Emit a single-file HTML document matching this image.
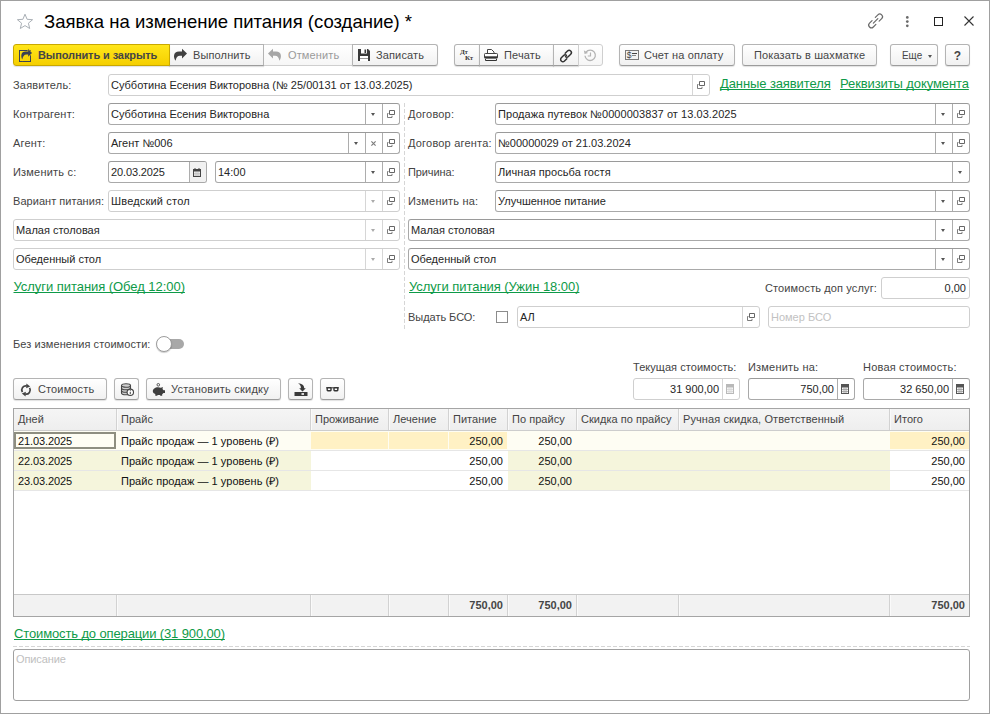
<!DOCTYPE html><html lang="ru"><head><meta charset="utf-8"><title>Заявка на изменение питания</title><style>
*{box-sizing:border-box}
html,body{margin:0;padding:0}
body{width:990px;height:714px;position:relative;overflow:hidden;background:#fff;font-family:"Liberation Sans",sans-serif;font-size:11px;color:#1a1a1a}
#frame{position:absolute;left:0;top:0;width:990px;height:714px;border:1px solid #a0a0a0;pointer-events:none}
.a{position:absolute;white-space:nowrap}
.lbl{position:absolute;white-space:nowrap;font-size:11px;color:#444;line-height:14px;letter-spacing:.2px}

.fld{position:absolute;height:22px;padding-top:1px;border:1px solid #a9a9a9;border-top-color:#9a9a9a;border-radius:3px;background:#fff;font-size:11px;line-height:19px;padding-left:2px;color:#262626;white-space:nowrap;overflow:hidden}
.fld.ro{border-color:#cfcfcf}
.fld.num{text-align:right;padding-right:0}
.fld .seg{position:absolute;top:0;bottom:0;width:17px;border-left:1px solid #adadad}
.fld.ro .seg{border-left-color:#d6d6d6}
.btn{position:absolute;height:22px;letter-spacing:.13px;border:1px solid #b4b4b4;border-bottom-color:#9c9c9c;border-radius:3px;background:linear-gradient(#ffffff,#f1f1f1);font-size:11px;line-height:20px;color:#464646;white-space:nowrap;box-shadow:0 1px 1px rgba(0,0,0,.12)}
.btn.dis{border-color:#cfcfcf;background:linear-gradient(#fff,#f6f6f6);box-shadow:none}
.btn.y{background:linear-gradient(#ffe61a,#f5cf00);border-color:#c9a800;font-weight:bold;color:#454545}
.lnk{position:absolute;white-space:nowrap;font-size:13px;color:#0e9a48;text-decoration:underline;text-decoration-skip-ink:none;letter-spacing:-.1px;line-height:16px}
.ph{color:#c2c2c2}
svg{position:absolute;overflow:visible}
.tri{position:absolute;width:0;height:0;border-left:2.5px solid transparent;border-right:2.5px solid transparent;border-top:3px solid #555}
</style></head><body>
<svg style="left:16px;top:12.700px" width="18" height="17" viewBox="0 0 18 17"><path d="M9 1.2l2.1 5.1 5.5 .4-4.2 3.5 1.3 5.3L9 12.6l-4.7 2.9 1.3-5.3L1.4 6.7l5.5-.4z" fill="none" stroke="#aab0b6" stroke-width="1"/></svg>
<div class="a" style="left:44px;top:10px;font-size:18.5px;line-height:24px;color:#000">Заявка на изменение питания (создание) *</div>
<svg style="left:867px;top:12px" width="17" height="17" viewBox="0 0 17 17"><g transform="translate(8.600,8.900) rotate(-45)" fill="none" stroke="#6a6a6a" stroke-width="1.200" stroke-linecap="round"><path d="M-2.300 -2.700H-5.900a2.700 2.700 0 0 0 0 5.400H-2.300"/><path d="M2.300 -2.700H5.900a2.700 2.700 0 0 1 0 5.400H2.300"/><path d="M-3.200 0H3.200"/></g></svg>
<svg style="left:905px;top:16px" width="5" height="12" viewBox="0 0 5 12"><circle cx="2.300" cy="1.400" r="1.350" fill="#6a6a6a"/><circle cx="2.300" cy="5.600" r="1.350" fill="#6a6a6a"/><circle cx="2.300" cy="9.800" r="1.350" fill="#6a6a6a"/></svg>
<div class="a" style="left:934px;top:17px;width:9px;height:9px;border:1px solid #222"></div>
<svg style="left:964px;top:16px" width="10" height="10" viewBox="0 0 10 10"><path d="M0.5 0.5l9 9M9.5 0.5l-9 9" stroke="#333" stroke-width="1.1" fill="none"/></svg>
<div class="btn y" style="left:13px;top:44px;width:157px;border-radius:3px 0 0 3px;z-index:2"><svg style="left:5px;top:3px" width="14" height="14" viewBox="0 0 14 14"><rect x="0.5" y="2.5" width="11" height="11" fill="none" stroke="#3c4254" stroke-width="1"/><path d="M3.300 11.500C1.500 8 2 3.500 6.500 3.500H9.200V1L13 5 9.200 8.800V6.500H7.500C5 6.500 3.800 8.500 3.300 11.500Z" fill="#3c4254" stroke="#fbdc0a" stroke-width="1.200" paint-order="stroke"/></svg><span style="margin-left:24px;letter-spacing:-.1px">Выполнить и закрыть</span></div>
<div class="btn " style="left:169px;top:44px;width:95px;border-radius:0;border-left:none"><svg style="left:4px;top:3px" width="14" height="13" viewBox="0 0 14 13"><path d="M2.6 12.800C0.200 9.500 0 3.500 6 3.500H9V0.700L14 5.500 9 10.400V7.700H7C4.500 7.700 3 9.500 2.600 12.800Z" fill="#414141"/></svg><span style="margin-left:24px">Выполнить</span></div>
<div class="btn dis" style="left:264px;top:44px;width:88px;border-radius:0;border-left:none;border-right:none"><svg style="left:4px;top:3px" width="14" height="13" viewBox="0 0 14 13"><path d="M2.6 12.800C0.200 9.500 0 3.500 6 3.500H9V0.700L14 5.500 9 10.400V7.700H7C4.500 7.700 3 9.500 2.600 12.800Z" fill="#a6a6a6" transform="translate(14,0) scale(-1,1)"/></svg><span style="margin-left:24px;color:#9a9a9a">Отменить</span></div>
<div class="btn " style="left:352px;top:44px;width:86px;border-radius:0 3px 3px 0"><svg style="left:5px;top:4px" width="12" height="12" viewBox="0 0 12 12"><path d="M0 0h10l2 2v10h-12z" fill="#3a3a3a"/><rect x="3" y="0" width="6" height="4.500" fill="#fff"/><rect x="6.500" y="0.500" width="1.600" height="3.500" fill="#3a3a3a"/><rect x="2" y="7" width="8" height="5" fill="#fff"/><path d="M2 9.500h8" stroke="#9a9a9a" stroke-width="1"/></svg><span style="margin-left:23px">Записать</span></div>
<div class="btn " style="left:454px;top:44px;width:26px;border-radius:3px 0 0 3px"><span class="a" style="left:5px;top:3px;font-family:'Liberation Serif',serif;font-size:7px;font-weight:bold;line-height:8px;color:#333;letter-spacing:-.2px">Д<span style="font-size:6px">т</span></span><span class="a" style="left:10px;top:9px;font-family:'Liberation Serif',serif;font-size:7px;font-weight:bold;line-height:8px;color:#333;letter-spacing:-.2px">К<span style="font-size:6px">т</span></span></div>
<div class="btn " style="left:479px;top:44px;width:75px;border-radius:0"><svg style="left:4px;top:4px" width="14" height="12" viewBox="0 0 14 12"><path d="M3.500 4.500V.5h4l2.500 2.500v1.500" fill="#fff" stroke="#444"/><rect x="0.500" y="4.500" width="13" height="4.500" rx="0.800" fill="#fff" stroke="#444"/><rect x="0.500" y="7.300" width="13" height="2" fill="#333"/><path d="M1.500 10v1.500h11V10" fill="none" stroke="#333"/></svg><span style="margin-left:24px">Печать</span></div>
<div class="btn " style="left:553px;top:44px;width:26px;border-radius:0"><svg style="left:5px;top:4px" width="14" height="14" viewBox="0 0 14 14"><g fill="none" stroke="#333" stroke-width="1.450" stroke-linecap="round"><path d="M6.200 4.300l2.300-2.300a2.200 2.200 0 0 1 3.200 3.200l-2.300 2.300a2.200 2.200 0 0 1-2.900 .2"/><path d="M7.800 9.700l-2.300 2.300a2.200 2.200 0 0 1-3.200-3.200l2.300-2.300a2.200 2.200 0 0 1 2.900-.2"/></g></svg></div>
<div class="btn dis" style="left:578px;top:44px;width:25px;border-radius:0 3px 3px 0"><svg style="left:4px;top:4px" width="14" height="13" viewBox="0 0 14 13"><path d="M3 3.200A5.200 5.200 0 1 1 2 6.800" fill="none" stroke="#b4b4b4" stroke-width="1.300"/><path d="M0.800 1.200l.8 3.800 3.500-1z" fill="#b4b4b4"/><path d="M7.500 3.500v3.500h-2.700" fill="none" stroke="#b4b4b4" stroke-width="1.200"/></svg></div>
<div class="btn " style="left:619px;top:44px;width:116px;"><svg style="left:5px;top:5px" width="14" height="10" viewBox="0 0 14 10"><rect x="0.500" y="0.500" width="13" height="9" fill="#f3f3f3" stroke="#7a7a7a"/><path d="M7 3.500h5" stroke="#444"/><path d="M7 5.500h4" stroke="#888"/><text x="1.800" y="8.200" font-size="8.500" fill="#444" font-family="Liberation Sans,sans-serif">$</text></svg><span style="margin-left:24px">Счет на оплату</span></div>
<div class="btn " style="left:742px;top:44px;width:135px;"><span style="margin-left:11px">Показать в шахматке</span></div>
<div class="btn " style="left:890px;top:44px;width:48px;"><span style="margin-left:11px;letter-spacing:0;display:inline-block;transform:scaleX(.9);transform-origin:0 50%">Еще</span><i class="tri" style="left:37px;top:10px;border-top-color:#555"></i></div>
<div class="btn " style="left:945px;top:44px;width:25px;"><span style="display:block;text-align:center;font-weight:bold;font-size:12px;line-height:22px">?</span></div>
<div class="lbl" style="left:13px;top:78px;">Заявитель:</div>
<div class="fld ro " style="left:108px;top:74px;width:602px;height:22px;">Субботина Есения Викторовна (№ 25/00131 от 13.03.2025)<span class="seg" style="right:0px"><svg style="left:4px;top:6px" width="8" height="8" viewBox="0 0 8 8"><path d="M0.5 3.5h4.500v4h-4.500z" fill="none" stroke="#666" stroke-width="1" opacity=".85"/><rect x="1.500" y="0" width="6.500" height="5.800" fill="#fff"/><path d="M2.500 0.5h5v4h-5z" fill="#fff" stroke="#666" stroke-width="1"/></svg></span></div>
<div class="lnk" style="left:720px;top:76px">Данные заявителя</div>
<div class="lnk" style="left:840px;top:76px">Реквизиты документа</div>
<div class="lbl" style="left:13px;top:107px;">Контрагент:</div>
<div class="fld  " style="left:108px;top:103px;width:292px;height:22px;">Субботина Есения Викторовна<span class="seg" style="right:0px"><svg style="left:4px;top:6px" width="8" height="8" viewBox="0 0 8 8"><path d="M0.5 3.5h4.500v4h-4.500z" fill="none" stroke="#666" stroke-width="1" opacity=".85"/><rect x="1.500" y="0" width="6.500" height="5.800" fill="#fff"/><path d="M2.500 0.5h5v4h-5z" fill="#fff" stroke="#666" stroke-width="1"/></svg></span><span class="seg" style="right:17px"><i class="tri" style="left:5px;top:8.5px;border-top-color:#555"></i></span></div>
<div class="lbl" style="left:408px;top:107px;">Договор:</div>
<div class="fld  " style="left:495px;top:103px;width:475px;height:22px;"><span style="letter-spacing:.06px">Продажа путевок №0000003837 от 13.03.2025</span><span class="seg" style="right:0px"><svg style="left:4px;top:6px" width="8" height="8" viewBox="0 0 8 8"><path d="M0.5 3.5h4.500v4h-4.500z" fill="none" stroke="#666" stroke-width="1" opacity=".85"/><rect x="1.500" y="0" width="6.500" height="5.800" fill="#fff"/><path d="M2.500 0.5h5v4h-5z" fill="#fff" stroke="#666" stroke-width="1"/></svg></span><span class="seg" style="right:17px"><i class="tri" style="left:5px;top:8.5px;border-top-color:#555"></i></span></div>
<div class="lbl" style="left:13px;top:136px;">Агент:</div>
<div class="fld  " style="left:108px;top:132px;width:292px;height:22px;">Агент №006<span class="seg" style="right:0px"><svg style="left:4px;top:6px" width="8" height="8" viewBox="0 0 8 8"><path d="M0.5 3.5h4.500v4h-4.500z" fill="none" stroke="#666" stroke-width="1" opacity=".85"/><rect x="1.500" y="0" width="6.500" height="5.800" fill="#fff"/><path d="M2.500 0.5h5v4h-5z" fill="#fff" stroke="#666" stroke-width="1"/></svg></span><span class="seg" style="right:17px"><svg style="left:5px;top:7.500px" width="5" height="5" viewBox="0 0 5 5"><path d="M0.400 0.400l4.200 4.200M4.600 0.400l-4.200 4.200" stroke="#7d7d7d" stroke-width="1.150" fill="none"/></svg></span><span class="seg" style="right:34px"><i class="tri" style="left:5px;top:8.5px;border-top-color:#555"></i></span></div>
<div class="lbl" style="left:408px;top:136px;">Договор агента:</div>
<div class="fld  " style="left:495px;top:132px;width:475px;height:22px;">№00000029 от 21.03.2024<span class="seg" style="right:0px"><svg style="left:4px;top:6px" width="8" height="8" viewBox="0 0 8 8"><path d="M0.5 3.5h4.500v4h-4.500z" fill="none" stroke="#666" stroke-width="1" opacity=".85"/><rect x="1.500" y="0" width="6.500" height="5.800" fill="#fff"/><path d="M2.500 0.5h5v4h-5z" fill="#fff" stroke="#666" stroke-width="1"/></svg></span><span class="seg" style="right:17px"><i class="tri" style="left:5px;top:8.5px;border-top-color:#555"></i></span></div>
<div class="lbl" style="left:13px;top:165px;">Изменить с:</div>
<div class="fld  " style="left:108px;top:161px;width:99px;height:22px;"><span style="letter-spacing:-.12px">20.03.2025</span><span class="seg" style="right:0px;background:#f1f1f1"><svg style="left:3px;top:6px" width="8" height="9" viewBox="0 0 8 9"><rect x="0.500" y="1.500" width="7" height="7" fill="#ececec" stroke="#444"/><rect x="0" y="1" width="8" height="2.500" fill="#444"/><rect x="1.500" y="0" width="1" height="1.500" fill="#444"/><rect x="5.500" y="0" width="1" height="1.500" fill="#444"/><path d="M1 5.500h6M1 7h6M3 4v4M5 4v4" stroke="#bdbdbd" stroke-width=".7" fill="none"/></svg></span></div>
<div class="fld  " style="left:215px;top:161px;width:185px;height:22px;">14:00<span class="seg" style="right:0px"><svg style="left:4px;top:6px" width="8" height="8" viewBox="0 0 8 8"><path d="M0.5 3.5h4.500v4h-4.500z" fill="none" stroke="#666" stroke-width="1" opacity=".85"/><rect x="1.500" y="0" width="6.500" height="5.800" fill="#fff"/><path d="M2.500 0.5h5v4h-5z" fill="#fff" stroke="#666" stroke-width="1"/></svg></span><span class="seg" style="right:17px"><i class="tri" style="left:5px;top:8.5px;border-top-color:#555"></i></span></div>
<div class="lbl" style="left:408px;top:165px;letter-spacing:-.1px">Причина:</div>
<div class="fld  " style="left:495px;top:161px;width:475px;height:22px;"><span style="letter-spacing:.07px">Личная просьба гостя</span><span class="seg" style="right:0px"><i class="tri" style="left:5px;top:8.5px;border-top-color:#555"></i></span></div>
<div class="lbl" style="left:13px;top:194px;letter-spacing:.04px">Вариант питания:</div>
<div class="fld ro " style="left:108px;top:190px;width:292px;height:22px;"><span style="letter-spacing:.18px">Шведский стол</span><span class="seg" style="right:0px"><svg style="left:4px;top:6px" width="8" height="8" viewBox="0 0 8 8"><path d="M0.5 3.5h4.500v4h-4.500z" fill="none" stroke="#666" stroke-width="1" opacity=".85"/><rect x="1.500" y="0" width="6.500" height="5.800" fill="#fff"/><path d="M2.500 0.5h5v4h-5z" fill="#fff" stroke="#666" stroke-width="1"/></svg></span><span class="seg" style="right:17px"><i class="tri" style="left:5px;top:8.5px;border-top-color:#aaa"></i></span></div>
<div class="lbl" style="left:408px;top:194px;">Изменить на:</div>
<div class="fld  " style="left:495px;top:190px;width:475px;height:22px;">Улучшенное питание<span class="seg" style="right:0px"><svg style="left:4px;top:6px" width="8" height="8" viewBox="0 0 8 8"><path d="M0.5 3.5h4.500v4h-4.500z" fill="none" stroke="#666" stroke-width="1" opacity=".85"/><rect x="1.500" y="0" width="6.500" height="5.800" fill="#fff"/><path d="M2.500 0.5h5v4h-5z" fill="#fff" stroke="#666" stroke-width="1"/></svg></span><span class="seg" style="right:17px"><i class="tri" style="left:5px;top:8.5px;border-top-color:#555"></i></span></div>
<div class="fld ro " style="left:13px;top:219px;width:387px;height:22px;">Малая столовая<span class="seg" style="right:0px"><svg style="left:4px;top:6px" width="8" height="8" viewBox="0 0 8 8"><path d="M0.5 3.5h4.500v4h-4.500z" fill="none" stroke="#666" stroke-width="1" opacity=".85"/><rect x="1.500" y="0" width="6.500" height="5.800" fill="#fff"/><path d="M2.500 0.5h5v4h-5z" fill="#fff" stroke="#666" stroke-width="1"/></svg></span><span class="seg" style="right:17px"><i class="tri" style="left:5px;top:8.5px;border-top-color:#aaa"></i></span></div>
<div class="fld  " style="left:408px;top:219px;width:562px;height:22px;">Малая столовая<span class="seg" style="right:0px"><svg style="left:4px;top:6px" width="8" height="8" viewBox="0 0 8 8"><path d="M0.5 3.5h4.500v4h-4.500z" fill="none" stroke="#666" stroke-width="1" opacity=".85"/><rect x="1.500" y="0" width="6.500" height="5.800" fill="#fff"/><path d="M2.500 0.5h5v4h-5z" fill="#fff" stroke="#666" stroke-width="1"/></svg></span><span class="seg" style="right:17px"><i class="tri" style="left:5px;top:8.5px;border-top-color:#555"></i></span></div>
<div class="fld ro " style="left:13px;top:248px;width:387px;height:22px;">Обеденный стол<span class="seg" style="right:0px"><svg style="left:4px;top:6px" width="8" height="8" viewBox="0 0 8 8"><path d="M0.5 3.5h4.500v4h-4.500z" fill="none" stroke="#666" stroke-width="1" opacity=".85"/><rect x="1.500" y="0" width="6.500" height="5.800" fill="#fff"/><path d="M2.500 0.5h5v4h-5z" fill="#fff" stroke="#666" stroke-width="1"/></svg></span><span class="seg" style="right:17px"><i class="tri" style="left:5px;top:8.5px;border-top-color:#aaa"></i></span></div>
<div class="fld  " style="left:408px;top:248px;width:562px;height:22px;">Обеденный стол<span class="seg" style="right:0px"><svg style="left:4px;top:6px" width="8" height="8" viewBox="0 0 8 8"><path d="M0.5 3.5h4.500v4h-4.500z" fill="none" stroke="#666" stroke-width="1" opacity=".85"/><rect x="1.500" y="0" width="6.500" height="5.800" fill="#fff"/><path d="M2.500 0.5h5v4h-5z" fill="#fff" stroke="#666" stroke-width="1"/></svg></span><span class="seg" style="right:17px"><i class="tri" style="left:5px;top:8.5px;border-top-color:#555"></i></span></div>
<div class="lnk" style="left:13.5px;top:279px;letter-spacing:-.05px">Услуги питания (Обед 12:00)</div>
<div class="lnk" style="left:409px;top:279px;letter-spacing:-.05px">Услуги питания (Ужин 18:00)</div>
<div class="lbl" style="left:765px;top:281px;letter-spacing:.12px">Стоимость доп услуг:</div>
<div class="fld ro num" style="left:881px;top:277px;width:89px;height:22px;padding-right:3px">0,00</div>
<div class="lbl" style="left:408px;top:310px;letter-spacing:-.04px">Выдать БСО:</div>
<div class="a" style="left:496px;top:311px;width:12px;height:12px;border:1px solid #8c8c8c;background:#fff"></div>
<div class="fld ro " style="left:517px;top:306px;width:243px;height:22px;">АЛ<span class="seg" style="right:0px"><svg style="left:4px;top:6px" width="8" height="8" viewBox="0 0 8 8"><path d="M0.5 3.5h4.500v4h-4.500z" fill="none" stroke="#666" stroke-width="1" opacity=".85"/><rect x="1.500" y="0" width="6.500" height="5.800" fill="#fff"/><path d="M2.500 0.5h5v4h-5z" fill="#fff" stroke="#666" stroke-width="1"/></svg></span></div>
<div class="fld ro " style="left:768px;top:306px;width:202px;height:22px;"><span class="ph">Номер БСО</span></div>
<div class="lbl" style="left:13px;top:337px;letter-spacing:.08px">Без изменения стоимости:</div>
<div class="a" style="left:161px;top:339px;width:23px;height:10px;border-radius:5px;background:#a8a8a8"></div>
<div class="a" style="left:156px;top:336px;width:16px;height:16px;border-radius:50%;background:#fff;border:1px solid #9c9c9c;box-shadow:0 1px 1px rgba(0,0,0,.2)"></div>
<div class="lbl" style="left:633px;top:360px;letter-spacing:.05px">Текущая стоимость:</div>
<div class="lbl" style="left:748px;top:360px;">Изменить на:</div>
<div class="lbl" style="left:863px;top:360px;">Новая стоимость:</div>
<div class="fld ro num" style="left:633px;top:378px;width:107px;height:22px;padding-right:20px">31 900,00<span class="seg" style="right:0px"><svg style="left:3px;top:5px" width="8" height="10" viewBox="0 0 8 10"><rect x="0.5" y="0.5" width="7" height="9" fill="#f4f4f4" stroke="#b9b9b9"/><rect x="1" y="1" width="6" height="2.5" fill="#b9b9b9"/><path d="M3 4v5M5 4v5M1 5.5h6M1 7.5h6" stroke="#d5d5d5" stroke-width=".8" fill="none"/></svg></span></div>
<div class="fld  num" style="left:748px;top:378px;width:107px;height:22px;padding-right:20px">750,00<span class="seg" style="right:0px"><svg style="left:3px;top:5px" width="8" height="10" viewBox="0 0 8 10"><rect x="0.5" y="0.5" width="7" height="9" fill="#f4f4f4" stroke="#555"/><rect x="1" y="1" width="6" height="2.5" fill="#555"/><path d="M3 4v5M5 4v5M1 5.5h6M1 7.5h6" stroke="#9a9a9a" stroke-width=".8" fill="none"/></svg></span></div>
<div class="fld  num" style="left:863px;top:378px;width:107px;height:22px;padding-right:20px">32 650,00<span class="seg" style="right:0px"><svg style="left:3px;top:5px" width="8" height="10" viewBox="0 0 8 10"><rect x="0.5" y="0.5" width="7" height="9" fill="#f4f4f4" stroke="#555"/><rect x="1" y="1" width="6" height="2.5" fill="#555"/><path d="M3 4v5M5 4v5M1 5.5h6M1 7.5h6" stroke="#9a9a9a" stroke-width=".8" fill="none"/></svg></span></div>
<div class="btn " style="left:13px;top:378px;width:94px;"><svg style="left:6px;top:5px" width="12" height="12" viewBox="0 0 12 12"><g fill="none" stroke="#444" stroke-width="1.700"><path d="M2.360 8.100A4.200 4.200 0 0 1 6.730 1.860"/><path d="M9.640 3.900A4.200 4.200 0 0 1 5.270 10.140"/></g><path d="M6.400 -.6L10.200 2.400 6.200 4.200z" fill="#444"/><path d="M5.600 12.600L1.800 9.600 5.800 7.800z" fill="#444"/></svg><span style="margin-left:24px">Стоимость</span></div>
<div class="btn " style="left:114px;top:378px;width:25px;"><svg style="left:5px;top:4px" width="14" height="13" viewBox="0 0 14 13"><g fill="#cfcfcf" stroke="#444" stroke-width="1.100"><path d="M1.500 2.500v7.500c0 1 2 1.800 4.500 1.800s4.500-.8 4.500-1.800V2.500"/><ellipse cx="6" cy="2.500" rx="4.500" ry="1.800"/><path d="M1.500 5c0 1 2 1.800 4.500 1.800s4.500-.8 4.500-1.800M1.500 7.500c0 1 2 1.800 4.500 1.800s4.500-.8 4.500-1.800" fill="none"/><circle cx="10.300" cy="9.300" r="3.200" fill="#fff"/></g><path d="M10.300 7.300v.9M10.300 9v2.300" stroke="#555" stroke-width="1.100"/></svg></div>
<div class="btn " style="left:146px;top:378px;width:135px;"><svg style="left:5px;top:4px" width="14" height="13" viewBox="0 0 14 13"><circle cx="6.300" cy="1.800" r="1.300" fill="none" stroke="#555" stroke-width="1"/><path d="M.8 8.200c0-2.300 2.200-4 5.200-4 1.100 0 2.100.2 2.900.6l2-.8-.4 1.900c.5.400.8.900 1 1.400h1.500v2.600h-1.600c-.3.500-.7.900-1.200 1.200V12.800H8.300l-.3-.9a8 8 0 0 1-2.400 0l-.3.900H3.300v-1.700C1.800 10.400.8 9.400.8 8.200z" fill="#3e3e3e"/></svg><span style="margin-left:24px;letter-spacing:.23px">Установить скидку</span></div>
<div class="btn " style="left:288px;top:378px;width:25px;"><svg style="left:5px;top:4px" width="14" height="13" viewBox="0 0 14 13"><path d="M4 .3c4 .3 6.300 2 6.200 5h1.600L8.500 8.600 5.200 5.300h1.700C7 3.300 6.300 1.500 4 .3z" fill="#3a3a3a"/><rect x="0.500" y="9" width="13" height="4" fill="#3a3a3a"/><rect x="7.500" y="10.200" width="2.500" height="1.600" fill="#fff"/></svg></div>
<div class="btn " style="left:320px;top:378px;width:25px;"><svg style="left:5px;top:8px" width="13" height="5" viewBox="0 0 13 5"><path d="M0 .8h13" stroke="#333" stroke-width="1"/><rect x="1.200" y="0.700" width="3.800" height="3" rx=".6" fill="#fff" stroke="#333" stroke-width="1.400"/><rect x="8" y="0.700" width="3.800" height="3" rx=".6" fill="#fff" stroke="#333" stroke-width="1.400"/></svg></div>
<div class="a" style="left:13px;top:408px;width:957px;height:209px;border:1px solid #a5a5a5;background:#fff"></div>
<div class="a" style="left:14px;top:409px;width:955px;height:22px;background:linear-gradient(#f5f5f5,#eeeeee);border-bottom:1px solid #cdcdcd"></div>
<div class="a" style="left:14px;top:409px;width:102px;height:21px;padding-left:4px;line-height:20px;color:#444;font-size:11px;letter-spacing:.03px;overflow:hidden">Дней</div>
<div class="a" style="left:116px;top:409px;width:194px;height:21px;border-left:1px solid #d2d2d2;box-shadow:inset 1px 0 0 #fafafa;padding-left:4px;line-height:20px;color:#444;font-size:11px;letter-spacing:.03px;overflow:hidden">Прайс</div>
<div class="a" style="left:310px;top:409px;width:78px;height:21px;border-left:1px solid #d2d2d2;box-shadow:inset 1px 0 0 #fafafa;padding-left:4px;line-height:20px;color:#444;font-size:11px;letter-spacing:.03px;overflow:hidden">Проживание</div>
<div class="a" style="left:388px;top:409px;width:60px;height:21px;border-left:1px solid #d2d2d2;box-shadow:inset 1px 0 0 #fafafa;padding-left:4px;line-height:20px;color:#444;font-size:11px;letter-spacing:.03px;overflow:hidden">Лечение</div>
<div class="a" style="left:448px;top:409px;width:59px;height:21px;border-left:1px solid #d2d2d2;box-shadow:inset 1px 0 0 #fafafa;padding-left:4px;line-height:20px;color:#444;font-size:11px;letter-spacing:.03px;overflow:hidden">Питание</div>
<div class="a" style="left:507px;top:409px;width:69px;height:21px;border-left:1px solid #d2d2d2;box-shadow:inset 1px 0 0 #fafafa;padding-left:4px;line-height:20px;color:#444;font-size:11px;letter-spacing:.03px;overflow:hidden">По прайсу</div>
<div class="a" style="left:576px;top:409px;width:102px;height:21px;border-left:1px solid #d2d2d2;box-shadow:inset 1px 0 0 #fafafa;padding-left:4px;line-height:20px;color:#444;font-size:11px;letter-spacing:.03px;overflow:hidden">Скидка по прайсу</div>
<div class="a" style="left:678px;top:409px;width:211px;height:21px;border-left:1px solid #d2d2d2;box-shadow:inset 1px 0 0 #fafafa;padding-left:4px;line-height:20px;color:#444;font-size:11px;letter-spacing:.1px;overflow:hidden">Ручная скидка, Ответственный</div>
<div class="a" style="left:889px;top:409px;width:80px;height:21px;border-left:1px solid #d2d2d2;box-shadow:inset 1px 0 0 #fafafa;padding-left:4px;line-height:20px;color:#444;font-size:11px;letter-spacing:.03px;overflow:hidden">Итого</div>
<div class="a" style="left:14px;top:431px;width:955px;height:19px;background:#fefdf3"></div>
<div class="a" style="left:14px;top:450px;width:955px;height:1px;background:#e6e6e6"></div>
<div class="a" style="left:14px;top:432px;width:102px;height:17px;background:transparent;line-height:18px;text-align:left;padding:0 4px 0 4px;color:#111;overflow:hidden"><span style="letter-spacing:-.1px">21.03.2025</span></div>
<div class="a" style="left:117px;top:432px;width:193px;height:17px;background:transparent;line-height:18px;text-align:left;padding:0 4px 0 4px;color:#111;overflow:hidden"><span style="letter-spacing:.05px">Прайс продаж — 1 уровень (₽)</span></div>
<div class="a" style="left:311px;top:432px;width:77px;height:17px;background:#fff1c4;line-height:18px;text-align:left;padding:0 4px 0 4px;color:#111;overflow:hidden"></div>
<div class="a" style="left:389px;top:432px;width:59px;height:17px;background:#fff1c4;line-height:18px;text-align:left;padding:0 4px 0 4px;color:#111;overflow:hidden"></div>
<div class="a" style="left:449px;top:432px;width:58px;height:17px;background:#fff1c4;line-height:18px;text-align:right;padding:0 4px 0 4px;color:#111;overflow:hidden">250,00</div>
<div class="a" style="left:508px;top:432px;width:68px;height:17px;background:transparent;line-height:18px;text-align:right;padding:0 4px 0 4px;color:#111;overflow:hidden">250,00</div>
<div class="a" style="left:577px;top:432px;width:101px;height:17px;background:transparent;line-height:18px;text-align:left;padding:0 4px 0 4px;color:#111;overflow:hidden"></div>
<div class="a" style="left:679px;top:432px;width:210px;height:17px;background:transparent;line-height:18px;text-align:left;padding:0 4px 0 4px;color:#111;overflow:hidden"></div>
<div class="a" style="left:890px;top:432px;width:79px;height:17px;background:#fff1c4;line-height:18px;text-align:right;padding:0 4px 0 4px;color:#111;overflow:hidden">250,00</div>
<div class="a" style="left:14px;top:470px;width:955px;height:1px;background:#e6e6e6"></div>
<div class="a" style="left:14px;top:451px;width:103px;height:19px;background:#f5f5dc;line-height:20px;text-align:left;padding:0 5px 0 4px;color:#111;overflow:hidden"><span style="letter-spacing:-.1px">22.03.2025</span></div>
<div class="a" style="left:117px;top:451px;width:194px;height:19px;background:#f5f5dc;line-height:20px;text-align:left;padding:0 5px 0 4px;color:#111;overflow:hidden"><span style="letter-spacing:.05px">Прайс продаж — 1 уровень (₽)</span></div>
<div class="a" style="left:311px;top:451px;width:78px;height:19px;background:#ffffff;line-height:20px;text-align:left;padding:0 5px 0 4px;color:#111;overflow:hidden"></div>
<div class="a" style="left:389px;top:451px;width:60px;height:19px;background:#ffffff;line-height:20px;text-align:left;padding:0 5px 0 4px;color:#111;overflow:hidden"></div>
<div class="a" style="left:449px;top:451px;width:59px;height:19px;background:#ffffff;line-height:20px;text-align:right;padding:0 5px 0 4px;color:#111;overflow:hidden">250,00</div>
<div class="a" style="left:508px;top:451px;width:69px;height:19px;background:#f5f5dc;line-height:20px;text-align:right;padding:0 5px 0 4px;color:#111;overflow:hidden">250,00</div>
<div class="a" style="left:577px;top:451px;width:102px;height:19px;background:#f5f5dc;line-height:20px;text-align:left;padding:0 5px 0 4px;color:#111;overflow:hidden"></div>
<div class="a" style="left:679px;top:451px;width:211px;height:19px;background:#f5f5dc;line-height:20px;text-align:left;padding:0 5px 0 4px;color:#111;overflow:hidden"></div>
<div class="a" style="left:890px;top:451px;width:79px;height:19px;background:#ffffff;line-height:20px;text-align:right;padding:0 4px 0 4px;color:#111;overflow:hidden">250,00</div>
<div class="a" style="left:14px;top:490px;width:955px;height:1px;background:#e6e6e6"></div>
<div class="a" style="left:14px;top:471px;width:103px;height:19px;background:#f5f5dc;line-height:20px;text-align:left;padding:0 5px 0 4px;color:#111;overflow:hidden"><span style="letter-spacing:-.1px">23.03.2025</span></div>
<div class="a" style="left:117px;top:471px;width:194px;height:19px;background:#f5f5dc;line-height:20px;text-align:left;padding:0 5px 0 4px;color:#111;overflow:hidden"><span style="letter-spacing:.05px">Прайс продаж — 1 уровень (₽)</span></div>
<div class="a" style="left:311px;top:471px;width:78px;height:19px;background:#ffffff;line-height:20px;text-align:left;padding:0 5px 0 4px;color:#111;overflow:hidden"></div>
<div class="a" style="left:389px;top:471px;width:60px;height:19px;background:#ffffff;line-height:20px;text-align:left;padding:0 5px 0 4px;color:#111;overflow:hidden"></div>
<div class="a" style="left:449px;top:471px;width:59px;height:19px;background:#ffffff;line-height:20px;text-align:right;padding:0 5px 0 4px;color:#111;overflow:hidden">250,00</div>
<div class="a" style="left:508px;top:471px;width:69px;height:19px;background:#f5f5dc;line-height:20px;text-align:right;padding:0 5px 0 4px;color:#111;overflow:hidden">250,00</div>
<div class="a" style="left:577px;top:471px;width:102px;height:19px;background:#f5f5dc;line-height:20px;text-align:left;padding:0 5px 0 4px;color:#111;overflow:hidden"></div>
<div class="a" style="left:679px;top:471px;width:211px;height:19px;background:#f5f5dc;line-height:20px;text-align:left;padding:0 5px 0 4px;color:#111;overflow:hidden"></div>
<div class="a" style="left:890px;top:471px;width:79px;height:19px;background:#ffffff;line-height:20px;text-align:right;padding:0 4px 0 4px;color:#111;overflow:hidden">250,00</div>
<div class="a" style="left:14px;top:432px;width:102px;height:17px;border:2px solid #8e8e80"></div>
<div class="a" style="left:14px;top:594px;width:955px;height:22px;background:#f2f2f2;border-top:1px solid #c8c8c8"></div>
<div class="a" style="left:14px;top:595px;width:102px;height:21px;padding-right:4px;line-height:21px;color:#454545;font-weight:bold;text-align:right"></div>
<div class="a" style="left:116px;top:595px;width:194px;height:21px;border-left:1px solid #d2d2d2;box-shadow:inset 1px 0 0 #fafafa;padding-right:4px;line-height:21px;color:#454545;font-weight:bold;text-align:right"></div>
<div class="a" style="left:310px;top:595px;width:78px;height:21px;border-left:1px solid #d2d2d2;box-shadow:inset 1px 0 0 #fafafa;padding-right:4px;line-height:21px;color:#454545;font-weight:bold;text-align:right"></div>
<div class="a" style="left:388px;top:595px;width:60px;height:21px;border-left:1px solid #d2d2d2;box-shadow:inset 1px 0 0 #fafafa;padding-right:4px;line-height:21px;color:#454545;font-weight:bold;text-align:right"></div>
<div class="a" style="left:448px;top:595px;width:59px;height:21px;border-left:1px solid #d2d2d2;box-shadow:inset 1px 0 0 #fafafa;padding-right:4px;line-height:21px;color:#454545;font-weight:bold;text-align:right">750,00</div>
<div class="a" style="left:507px;top:595px;width:69px;height:21px;border-left:1px solid #d2d2d2;box-shadow:inset 1px 0 0 #fafafa;padding-right:4px;line-height:21px;color:#454545;font-weight:bold;text-align:right">750,00</div>
<div class="a" style="left:576px;top:595px;width:102px;height:21px;border-left:1px solid #d2d2d2;box-shadow:inset 1px 0 0 #fafafa;padding-right:4px;line-height:21px;color:#454545;font-weight:bold;text-align:right"></div>
<div class="a" style="left:678px;top:595px;width:211px;height:21px;border-left:1px solid #d2d2d2;box-shadow:inset 1px 0 0 #fafafa;padding-right:4px;line-height:21px;color:#454545;font-weight:bold;text-align:right"></div>
<div class="a" style="left:889px;top:595px;width:80px;height:21px;border-left:1px solid #d2d2d2;box-shadow:inset 1px 0 0 #fafafa;padding-right:4px;line-height:21px;color:#454545;font-weight:bold;text-align:right">750,00</div>
<div class="lnk" style="left:14px;top:626px;letter-spacing:-.13px">Стоимость до операции (31 900,00)</div>
<div class="a" style="left:13px;top:646px;width:957px;height:1px;background:repeating-linear-gradient(to right,#d6d6d6 0 4px,transparent 4px 6px)"></div>
<div class="a" style="left:13px;top:649px;width:957px;height:52px;border:1px solid #a0a0a0;border-radius:3px;background:#fff;padding:3px 2px;color:#c0c0c0;letter-spacing:-.1px">Описание</div>
<div class="a" style="left:404px;top:103px;width:1px;height:226px;background:repeating-linear-gradient(to bottom,#d6d6d6 0 4px,transparent 4px 6px)"></div>
<div id="frame"></div>
</body></html>
